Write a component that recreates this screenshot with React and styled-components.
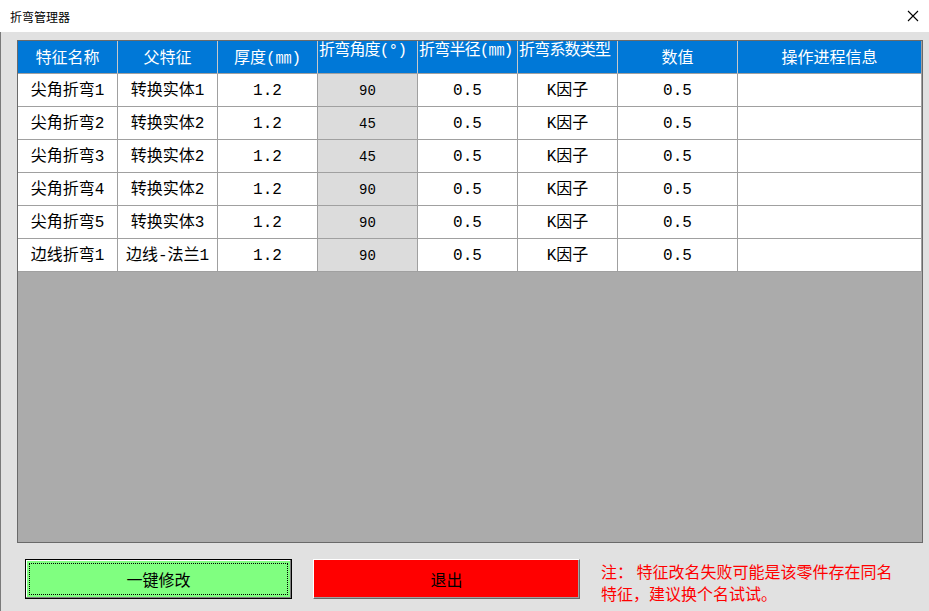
import React from 'react'
import styled, { createGlobalStyle } from 'styled-components'

const Global = createGlobalStyle`
  html, body {
    margin: 0;
    padding: 0;
    overflow: hidden;
    background: #e1e1e1;
  }
`

const cjk = `"Liberation Mono", "Noto Sans CJK SC", monospace`

const Window = styled.div`
  width: 929px;
  height: 611px;
  box-sizing: border-box;
  display: flex;
  flex-direction: column;
  background: #e1e1e1;
  font-family: ${cjk};
`

const TitleBar = styled.div`
  height: 32px;
  flex-shrink: 0;
  display: flex;
  align-items: center;
  justify-content: space-between;
  padding: 0 10px 0 10px;
  background: #fff;
  font-family: "Noto Sans CJK SC", sans-serif;
  font-size: 12px;
  color: #000;
`

const Close = styled.svg`
  width: 12px;
  height: 12px;
`

const Body = styled.div`
  flex-grow: 1;
  display: flex;
  flex-direction: column;
  padding: 8px 6px 0 16px;
  border-left: 1px solid #7a7a7a;
`

const Grid = styled.div`
  height: 503px;
  box-sizing: border-box;
  border: 1px solid #6a6a6a;
  background: #ababab;
  display: flex;
  flex-direction: column;
`

const Row = styled.div`
  display: flex;
  height: 33px;
  flex-shrink: 0;
`

const HeadCell = styled.div`
  width: ${p => p.$w}px;
  flex: ${p => (p.$w ? '0 0 auto' : '1 1 auto')};
  box-sizing: border-box;
  background: #0078d7;
  color: #fff;
  font-size: 16px;
  line-height: ${p => (p.$tight ? '20px' : '30px')};
  padding: ${p => (p.$tight ? '0 0 0 1px' : '3px 0 0')};
  letter-spacing: ${p => (p.$tight ? '-0.8px' : '0')};
  text-align: ${p => (p.$tight ? 'left' : 'center')};
  overflow: hidden;
  white-space: nowrap;
  border-right: 1px solid #c8c8c8;
  border-bottom: 1px solid #a0a0a0;
  &:last-child {
    border-right: 1px solid #a0a0a0;
  }
`

const Cell = styled.div`
  width: ${p => p.$w}px;
  flex: ${p => (p.$w ? '0 0 auto' : '1 1 auto')};
  box-sizing: border-box;
  padding-top: 2px;
  background: ${p => (p.$ro ? '#dcdcdc' : '#fff')};
  color: #000;
  font-size: ${p => (p.$ro ? '14px' : '16px')};
  line-height: 30px;
  text-align: center;
  white-space: nowrap;
  overflow: hidden;
  border-right: 1px solid #a0a0a0;
  border-bottom: 1px solid #a0a0a0;
`

const Footer = styled.div`
  display: flex;
  align-items: flex-start;
  margin-top: 16px;
  padding-left: 8px;
`

const Button = styled.button`
  position: relative;
  width: 267px;
  height: 40px;
  box-sizing: border-box;
  margin-right: 21px;
  padding: 0;
  font-family: ${cjk};
  font-size: 16px;
  color: #000;
  background: ${p => p.$bg};
  border: ${p => (p.$focus ? '1px solid #000' : '1px solid #fff')};
  border-right-color: ${p => (p.$focus ? '#000' : '#696969')};
  border-bottom-color: ${p => (p.$focus ? '#000' : '#696969')};
  box-shadow: ${p =>
    p.$focus
      ? 'inset -1px -1px #808080, inset 1px 1px #fff'
      : 'inset -1px -1px #a0a0a0'};
  &::after {
    content: '';
    display: ${p => (p.$focus ? 'block' : 'none')};
    position: absolute;
    inset: 3px;
    border: 1px dotted #000;
  }
`

const Note = styled.div`
  margin-top: 1px;
  font-family: "Noto Sans CJK SC", sans-serif;
  font-size: 16px;
  line-height: 22px;
  color: #ff0000;
`

const cols = [
  { t: '特征名称', w: 100 },
  { t: '父特征', w: 100 },
  { t: '厚度(㎜)', w: 100 },
  { t: '折弯角度(°)', w: 100, tight: true },
  { t: '折弯半径(㎜)', w: 100, tight: true },
  { t: '折弯系数类型', w: 100, tight: true },
  { t: '数值', w: 120 },
  { t: '操作进程信息', w: 0 },
]

const rows = [
  ['尖角折弯1', '转换实体1', '1.2', '90'],
  ['尖角折弯2', '转换实体2', '1.2', '45'],
  ['尖角折弯3', '转换实体2', '1.2', '45'],
  ['尖角折弯4', '转换实体2', '1.2', '90'],
  ['尖角折弯5', '转换实体3', '1.2', '90'],
  ['边线折弯1', '边线-法兰1', '1.2', '90'],
]

export default function App() {
  return (
    <Window>
      <Global />
      <TitleBar>
        <span>折弯管理器</span>
        <Close viewBox="0 0 12 12">
          <path d="M1 1 L11 11 M11 1 L1 11" stroke="#000" strokeWidth="1.1" fill="none" />
        </Close>
      </TitleBar>
      <Body>
        <Grid>
          <Row>
            {cols.map(c => (
              <HeadCell key={c.t} $w={c.w} $tight={c.tight}>{c.t}</HeadCell>
            ))}
          </Row>
          {rows.map((r, i) => (
            <Row key={i}>
              <Cell $w={100}>{r[0]}</Cell>
              <Cell $w={100}>{r[1]}</Cell>
              <Cell $w={100}>{r[2]}</Cell>
              <Cell $w={100} $ro>{r[3]}</Cell>
              <Cell $w={100}>0.5</Cell>
              <Cell $w={100}>K因子</Cell>
              <Cell $w={120}>0.5</Cell>
              <Cell $w={0}></Cell>
            </Row>
          ))}
        </Grid>
        <Footer>
          <Button $bg="#80ff80" $focus>一键修改</Button>
          <Button $bg="#ff0000">退出</Button>
          <Note>
            注： 特征改名失败可能是该零件存在同名<br />
            特征，建议换个名试试。
          </Note>
        </Footer>
      </Body>
    </Window>
  )
}
